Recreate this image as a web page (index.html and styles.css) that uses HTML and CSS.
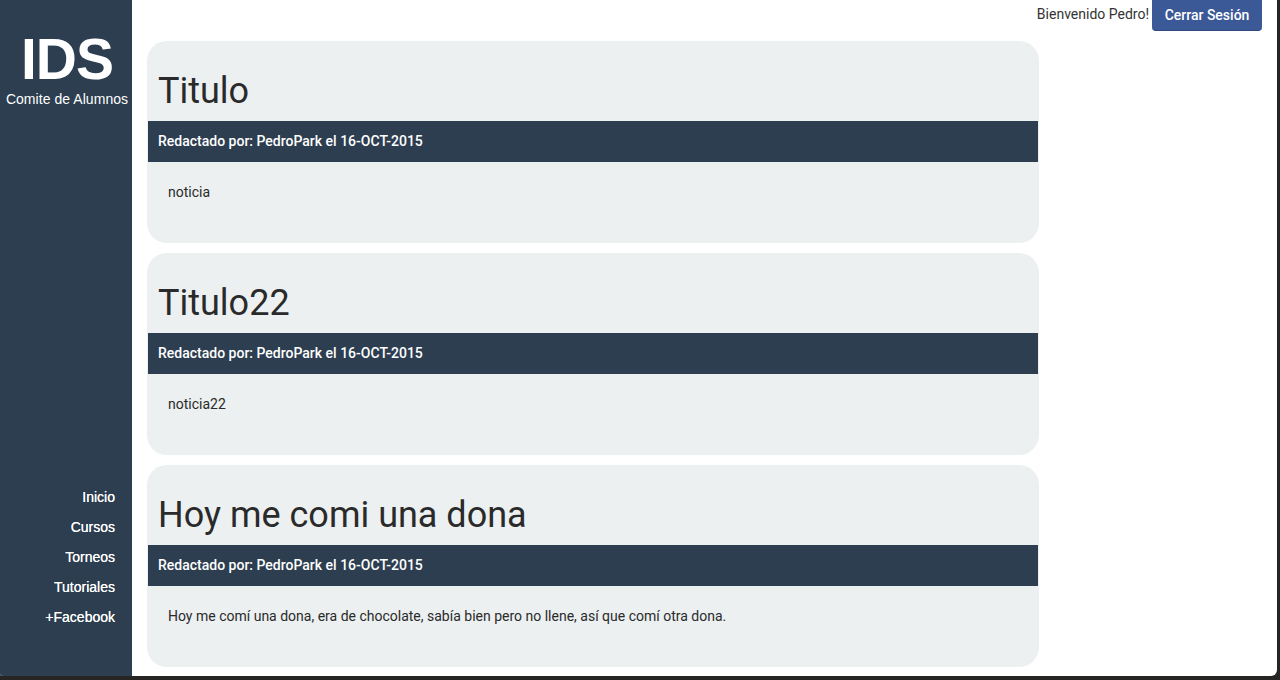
FILE: index.html
```html
<!DOCTYPE html>
<html lang="es">
<head>
<meta charset="utf-8">
<title>IDS - Comite de Alumnos</title>
<link rel="stylesheet" href="styles.css">
</head>
<body>
<div class="window">
  <aside class="sidebar">
    <div class="brand">
      <div class="brand-logo">IDS</div>
      <div class="brand-sub">Comite de Alumnos</div>
    </div>
    <nav class="nav">
      <a class="nav-link" href="#">Inicio</a>
      <a class="nav-link" href="#">Cursos</a>
      <a class="nav-link" href="#">Torneos</a>
      <a class="nav-link" href="#">Tutoriales</a>
      <a class="nav-link" href="#">+Facebook</a>
    </nav>
  </aside>
  <main class="main">
    <div class="topbar">
      <span class="welcome">Bienvenido Pedro!</span>
      <button class="btn-logout" type="button">Cerrar Sesión</button>
    </div>
    <div class="feed">
      <article class="post">
        <h1 class="post-title">Titulo</h1>
        <div class="post-meta">Redactado por: PedroPark el 16-OCT-2015</div>
        <div class="post-body">noticia</div>
      </article>
      <article class="post">
        <h1 class="post-title">Titulo22</h1>
        <div class="post-meta">Redactado por: PedroPark el 16-OCT-2015</div>
        <div class="post-body">noticia22</div>
      </article>
      <article class="post">
        <h1 class="post-title">Hoy me comi una dona</h1>
        <div class="post-meta">Redactado por: PedroPark el 16-OCT-2015</div>
        <div class="post-body">Hoy me comí una dona, era de chocolate, sabía bien pero no llene, así que comí otra dona.</div>
      </article>
    </div>
  </main>
</div>
</body>
</html>
```

FILE: styles.css
```css
html, body {
  margin: 0;
  padding: 0;
}

body {
  width: 1280px;
  height: 680px;
  overflow: hidden;
  background: #262523;
  font-family: Roboto, "Liberation Sans", sans-serif;
}

.window {
  width: 1277px;
  height: 676px;
  display: flex;
  background: #ffffff;
  border-radius: 0 0 6px 3px;
  overflow: hidden;
}

.sidebar {
  width: 132px;
  flex: none;
  background: #2c3e50;
  color: #ffffff;
  display: flex;
  flex-direction: column;
  font-family: "Liberation Sans", Arial, sans-serif;
}

.brand {
  padding-top: 29px;
  text-align: center;
}

.brand-logo {
  font-size: 57px;
  font-weight: bold;
  line-height: 60px;
  padding-left: 2px;
  letter-spacing: -1px;
}

.brand-sub {
  font-size: 14px;
  line-height: 16px;
  margin-top: 2px;
  padding-left: 2px;
  white-space: nowrap;
  letter-spacing: 0.05px;
}

.nav {
  margin-top: auto;
  padding: 0 17px 44px 0;
  display: flex;
  flex-direction: column;
  align-items: flex-end;
}

.nav-link {
  color: #ffffff;
  text-decoration: none;
  font-size: 14px;
  line-height: 30px;
  text-shadow: 0 0 0.4px #ffffff;
}

.main {
  flex: 1;
  min-width: 0;
}

.topbar {
  height: 31px;
  display: flex;
  justify-content: flex-end;
  align-items: flex-start;
  padding-right: 15px;
}

.welcome {
  font-size: 14px;
  line-height: 18px;
  padding-top: 5px;
  color: #333333;
  margin-right: 3px;
}

.btn-logout {
  width: 110px;
  height: 31px;
  padding: 0;
  border: none;
  border-bottom: 1px solid #2e4a80;
  border-radius: 0 0 4px 4px;
  background: #3b5897;
  color: #ffffff;
  font-family: Roboto, "Liberation Sans", sans-serif;
  font-size: 14px;
  font-weight: 500;
}

.feed {
  padding: 10px 0 0 15px;
  display: flex;
  flex-direction: column;
  gap: 10px;
}

.post {
  width: 890px;
  padding: 0 1px;
  background: #ecf0f1;
  border-radius: 20px;
}

.post-title {
  margin: 0;
  padding: 30px 10px 10px;
  font-size: 36px;
  font-weight: 400;
  line-height: 40px;
  color: #2a2a2a;
}

.post-meta {
  height: 41px;
  box-sizing: border-box;
  padding: 10px 10px;
  background: #2c3e50;
  color: #ffffff;
  font-size: 14px;
  font-weight: 500;
  line-height: 21px;
}

.post-body {
  padding: 20px 20px 41px;
  font-size: 14px;
  line-height: 20px;
  color: #2a2a2a;
}
```
